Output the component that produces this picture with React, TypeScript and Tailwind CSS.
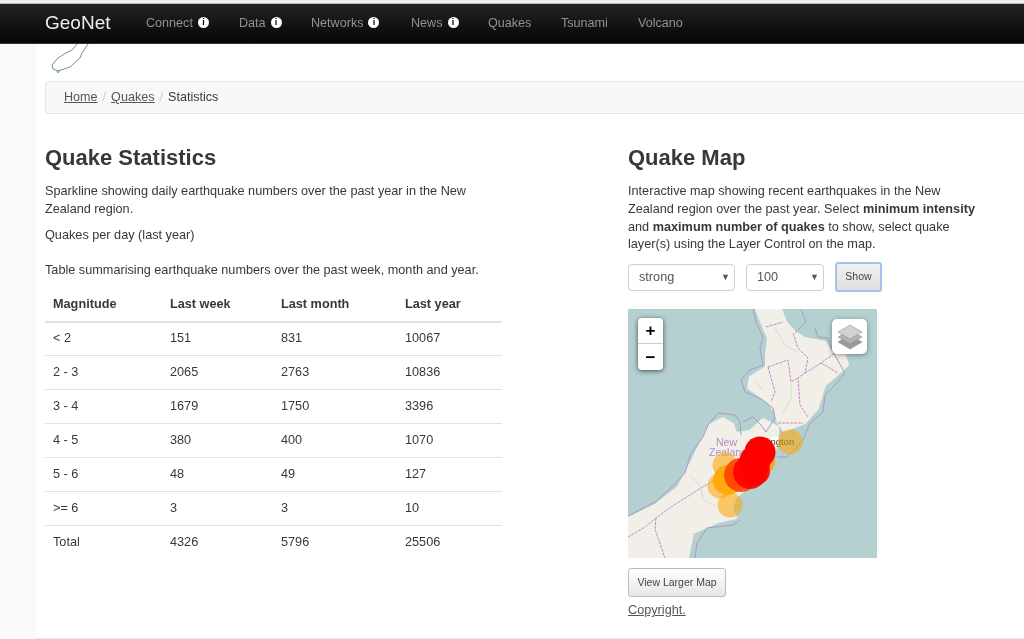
import React from 'react';

const navItems = [
  { label: 'Connect', info: true, w: 'w-[93px]' },
  { label: 'Data', info: true, w: 'w-[72px]' },
  { label: 'Networks', info: true, w: 'w-[100px]' },
  { label: 'News', info: true, w: 'w-[77px]' },
  { label: 'Quakes', info: false, w: 'w-[73px]' },
  { label: 'Tsunami', info: false, w: 'w-[77px]' },
  { label: 'Volcano', info: false, w: 'w-[70px]' },
];

const rows = [
  ['< 2', '151', '831', '10067'],
  ['2 - 3', '2065', '2763', '10836'],
  ['3 - 4', '1679', '1750', '3396'],
  ['4 - 5', '380', '400', '1070'],
  ['5 - 6', '48', '49', '127'],
  ['>= 6', '3', '3', '10'],
  ['Total', '4326', '5796', '25506'],
];

// info badge next to the nav labels
const InfoDot = () => (
  <span className="ml-[5px] inline-flex h-[11px] w-[11px] items-center justify-center rounded-full bg-white">
    <span className="text-[9px] font-bold leading-none text-black">i</span>
  </span>
);

// outline of the South Island poking out under the navbar
const Logo = () => (
  <svg width="40" height="30" viewBox="0 0 40 30" fill="none" stroke="#6f8fa0" strokeWidth="1">
    <path d="M38 0 L32 9 L30 14 L20 23 L14 25 L8 27 L3 25 L2 21 L8 14 L16 9 L22 6 L27 0" />
    <circle cx="8" cy="27.5" r="1" />
  </svg>
);

const QuakeMap = () => (
  <svg width="249" height="249" viewBox="0 0 249 249" className="block blur-[0.4px]">
    <rect width="249" height="249" fill="#b5d0d0" />
    {/* North Island */}
    <path
      d="M128 0 L133 13 L140 29 L138 46 L138 58 L122 68 L120 79 L127 84 L140 93 L147 103 L150 114 L156 122 L177 114 L190 99 L197 76 L207 68 L220 56 L217 46 L203 43 L197 33 L177 29 L167 23 L158 13 L153 0 Z"
      fill="#f2efe9"
      stroke="#f2efe9"
      strokeLinejoin="round"
      strokeWidth="2"
    />
    {/* South Island */}
    <path
      d="M0 209 L27 196 L50 178 L62 155 L72 135 L82 116 L95 109 L105 115 L108 124 L122 122 L135 110 L150 118 L150 135 L140 155 L125 175 L108 188 L104 200 L108 209 L90 213 L65 224 L60 249 L0 249 Z"
      fill="#f2efe9"
      stroke="#f2efe9"
      strokeLinejoin="round"
      strokeWidth="2"
    />
    {/* maritime boundary */}
    <path
      d="M0 207 L27 193 L43 179 L57 164 L63 144 L75 128 L80 116 L90 104 L107 106 L112 113 L113 126 M115 113 L125 108 L133 116 L138 123 L147 109 L145 99 L133 90 L117 83 L113 71 L122 61 L135 56 L132 39 L135 28 L128 13 L125 0 M173 0 L178 13 L167 24 M187 19 L190 28 L200 29 L205 43 L217 64 L207 76 L197 86 L195 103 L182 114 L174 133 L159 148 L149 148 M112 211 L105 216 L79 219 L69 234 L67 249"
      fill="none"
      stroke="#a79cc4"
      strokeLinejoin="round"
      strokeWidth="1"
    />
    {/* regional boundaries */}
    <path
      d="M138 18 L155 13 M140 58 L160 51 L163 73 L170 69 M165 24 L170 39 L180 49 L177 64 L170 69 L172 96 L180 108 M177 64 L193 54 L207 44 M193 54 L210 64 M140 58 L147 83 L143 93 M150 114 L175 114 M0 228 L17 218 L28 209 L43 198 L73 179 L87 171 M28 209 L27 220 L37 249"
      fill="none"
      stroke="#b97fc0"
      strokeWidth="0.9"
      strokeDasharray="3 1"
    />
    {/* roads */}
    <path
      d="M147 19 L157 36 L170 43 M163 74 L163 90 L155 104 M128 72 L135 82 M62 166 L73 178 L75 191 L88 197 M65 224 L70 232"
      fill="none"
      stroke="#c6dcc0"
      strokeWidth="0.8"
    />
    <text x="88" y="137" fontSize="10.5" fill="#b18cc4" fontFamily="Liberation Sans, sans-serif">New</text>
    <text x="81" y="147" fontSize="10.5" fill="#b18cc4" fontFamily="Liberation Sans, sans-serif">Zealand</text>
    <rect x="121" y="128" width="30" height="10" fill="#ffffff" />
    <text x="122" y="136" fontSize="9.5" fill="#333333" fontFamily="Liberation Sans, sans-serif">Wellington</text>
    {/* quake circles */}
    <g fill="#ffa500" fillOpacity="0.55">
      <circle cx="162" cy="133" r="12.5" />
      <circle cx="97" cy="156" r="12.5" />
      <circle cx="102" cy="196" r="12.5" />
      <circle cx="92" cy="177" r="12.5" />
    </g>
    <g fill="#ffa500" fillOpacity="0.9">
      <circle cx="100" cy="171" r="15" />
      <circle cx="123" cy="162" r="15" />
      <circle cx="133" cy="152" r="14" />
    </g>
    <g fill="#ff3b00" fillOpacity="0.85">
      <circle cx="113" cy="166" r="17" />
    </g>
    <g fill="#ff0000">
      <circle cx="132" cy="143" r="15.5" />
      <circle cx="127" cy="152" r="15.5" />
      <circle cx="122" cy="163" r="17" fillOpacity="0.9" />
      <circle cx="128" cy="162" r="14" fillOpacity="0.9" />
    </g>
  </svg>
);

export default function App() {
  return (
    <div className="h-[639px] overflow-hidden bg-[#fafafa] font-['Liberation_Sans',Arial,sans-serif] text-[12.7px] text-[#383838] blur-[0.3px]">
      <div className="h-[4px] border-b border-[#bbbbbb] bg-[#eeeeee]" />
      <nav className="flex h-[40px] items-center border-b border-[#333333] bg-gradient-to-b from-[#242424] to-[#060606] pb-[1px] pl-[45px]">
        <span className="w-[101px] text-[19px] text-[#eeeeee]">GeoNet</span>
        {navItems.map((item) => (
          <span key={item.label} className={`flex items-center text-[12.6px] text-[#929292] ${item.w}`}>
            {item.label}
            {item.info && <InfoDot />}
          </span>
        ))}
      </nav>
      <div className="ml-[36px] h-[595px] bg-white">
        <div className="h-[37px] pl-[14px]">
          <Logo />
        </div>
        <div className="ml-[9px] flex h-[33px] items-center rounded-l-[4px] border border-r-0 border-[#e6e6e6] bg-[#f8f8f8] pl-[18px] text-[12.6px]">
          <a className="text-[#555555] underline">Home</a>
          <span className="px-[5px] text-[#cccccc]">/</span>
          <a className="text-[#555555] underline">Quakes</a>
          <span className="px-[5px] text-[#cccccc]">/</span>
          <span>Statistics</span>
        </div>
        <div className="flex h-[525px] border-b border-[#e5e5e5] pl-[9px]">
          <section className="w-[583px] pt-[32px]">
            <h2 className="text-[22px] font-bold leading-[24px]">Quake Statistics</h2>
            <p className="mt-[13px] w-[440px] leading-[17.7px]">
              Sparkline showing daily earthquake numbers over the past year in the New Zealand region.
            </p>
            <p className="mt-[9px] leading-[17.7px]">Quakes per day (last year)</p>
            <p className="mt-[17px] leading-[17.7px]">
              Table summarising earthquake numbers over the past week, month and year.
            </p>
            <table className="mt-[7px] w-[457px] table-fixed border-collapse">
              <thead>
                <tr className="h-[35px] border-b-2 border-[#e2e2e2] text-left">
                  <th className="w-[125px] pl-[8px] pt-[2px] font-bold">Magnitude</th>
                  <th className="w-[111px] pt-[2px] font-bold">Last week</th>
                  <th className="w-[124px] pt-[2px] font-bold">Last month</th>
                  <th className="pt-[2px] font-bold">Last year</th>
                </tr>
              </thead>
              <tbody>
                {rows.map((row) => (
                  <tr key={row[0]} className="h-[34px] border-b border-[#e2e2e2] last:border-b-0">
                    <td className="pb-[1px] pl-[8px]">{row[0]}</td>
                    <td className="pb-[1px]">{row[1]}</td>
                    <td className="pb-[1px]">{row[2]}</td>
                    <td className="pb-[1px]">{row[3]}</td>
                  </tr>
                ))}
              </tbody>
            </table>
          </section>
          <section className="pt-[32px]">
            <h2 className="text-[22px] font-bold leading-[24px]">Quake Map</h2>
            <p className="mt-[13px] w-[352px] leading-[17.8px]">
              Interactive map showing recent earthquakes in the New Zealand region over the past year. Select <b>minimum intensity</b> and <b>maximum number of quakes</b> to show, select quake layer(s) using the Layer Control on the map.
            </p>
            <div className="mt-[8px] flex items-center">
              <div className="flex h-[27px] w-[107px] items-center justify-between rounded-[4px] border border-[#cfcfcf] bg-white pl-[10px] pr-[4px] pt-[1px] text-[#555555]">
                strong
                <span className="text-[9px]">▼</span>
              </div>
              <div className="ml-[11px] flex h-[27px] w-[78px] items-center justify-between rounded-[4px] border border-[#cfcfcf] bg-white pl-[10px] pr-[4px] pt-[1px] text-[#555555]">
                100
                <span className="text-[9px]">▼</span>
              </div>
              <button className="ml-[11px] h-[30px] w-[47px] rounded-[3px] border-2 border-[#a4c2f0] bg-gradient-to-b from-[#f0f0f0] to-[#e0e0e0] text-[10.5px] text-[#444444]">
                Show
              </button>
            </div>
            <div className="relative mt-[17px] h-[249px] w-[249px]">
              <QuakeMap />
              <div className="absolute left-[10px] top-[9px] flex w-[25px] flex-col rounded-[4px] bg-white shadow-[0_1px_5px_rgba(0,0,0,0.65)]">
                <span className="flex h-[26px] items-center justify-center border-b border-[#cccccc] text-[17px] font-bold leading-none text-black">+</span>
                <span className="flex h-[26px] items-center justify-center text-[17px] font-bold leading-none text-black">−</span>
              </div>
              <div className="absolute right-[10px] top-[10px] flex h-[35px] w-[35px] items-center justify-center rounded-[5px] bg-white shadow-[0_1px_5px_rgba(0,0,0,0.4)]">
                <svg width="26" height="26" viewBox="0 0 26 26">
                  <path d="M13 11 L25 18 L13 25 L1 18 Z" fill="#9a9a9a" stroke="#858585" strokeWidth="0.5" />
                  <path d="M13 6 L25 13 L13 20 L1 13 Z" fill="#b4b4b4" stroke="#858585" strokeWidth="0.5" />
                  <path d="M13 1 L25 8 L13 15 L1 8 Z" fill="#d2d2d2" stroke="#858585" strokeWidth="0.5" />
                </svg>
              </div>
            </div>
            <button className="mt-[10px] block h-[29px] w-[98px] rounded-[3px] border border-[#bbbbbb] bg-gradient-to-b from-white to-[#e6e6e6] text-[10.5px] text-[#444444]">
              View Larger Map
            </button>
            <a className="mt-[4px] block text-[#555555] underline">Copyright.</a>
          </section>
        </div>
      </div>
    </div>
  );
}
